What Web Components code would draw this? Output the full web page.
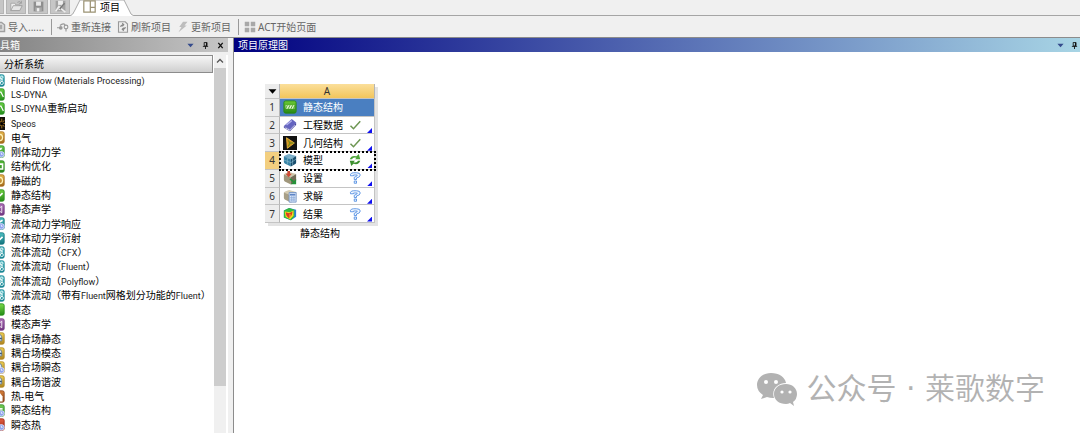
<!DOCTYPE html>
<html lang="zh-CN">
<head>
<meta charset="utf-8">
<title>项目</title>
<style>
  html, body {
    height: 100%;
  }
  body {
    margin: 0;
    overflow: hidden;
    background: #f0f0f0;
    color: #000;
    font: 10px/14px "Noto Sans", "Noto Sans CJK SC", sans-serif;
  }
</style>
</head>
<body>
<work-bench></work-bench>

<script>
const clock = '<circle cx="11.500" cy="11.500" r="3.500" fill="#8fa4ee" stroke="#dfe5ff"/><path d="M11.500 9.500v2h1.500" fill="none" stroke="#fff"/>';
const tile = (light, dark, mark) => `
  <defs><linearGradient id="g" x2="0" y2="1"><stop stop-color="${light}"/><stop offset="1" stop-color="${dark}"/></linearGradient></defs>
  <rect x="1" y="1" width="14" height="14" rx="2" fill="url(#g)" stroke="${dark}"/>${mark}`;
const cube = (top, left, right) => `
  <path d="M1 4.500Q1 3 3 2.500L7 1l8 2.500L9 7z" fill="${top}"/><path d="M1 4l8 3v8.500L2 12Q1 11 1 10z" fill="${left}"/><path d="M9 7l6-3.500V11q0 1-1 1.500L9 15.500z" fill="${right}"/>`;

const ICONS = {
  open: '<path d="M1 13V4h5l1 2h5v2" fill="#eee" stroke="#a0a0a0"/><path d="M1 13l3-6h11l-3 6z" fill="#e6e6e6" stroke="#989898"/><path d="M9 3q3-3 5 1m0-3v3h-3" fill="none" stroke="#999"/>',
  save: '<path d="M2 2h12v12H2z" fill="#8e8e8e"/><path d="M5 2h6v5H5z" fill="#e8e8e8"/><path d="M4 9h8v5H4z" fill="#aaa"/><path d="M6 10h3v4H6z" fill="#eee"/>',
  saveAs: '<path d="M2 1h12v13H2z" fill="#a2a2a2"/><path d="M5 1h6v5H5z" fill="#ededed"/><path d="M2 14l4-6 3 3 5 4M12 5l-6 7" fill="none" stroke="#eee" stroke-width="2"/><path d="M13 4l-6 7" stroke="#777" stroke-width="2"/>',
  layout: '<path d="M1 1h14v14H1zM9 1v14M9 9h6" fill="#fff" stroke="#9b9273" stroke-width="1.500"/>',
  page: '<path d="M1 2h9l4 3v9H1z" fill="#e2e2e2" stroke="#a0a0a0" stroke-width="2"/><path d="M8 5h3v6H8z" fill="#aaa"/>',
  reconnect: '<path d="M0 9h4M4 6q4-4 7-1" fill="none" stroke="#999" stroke-width="1.500"/><circle cx="5" cy="9" r="2.500" fill="#999"/><circle cx="12" cy="8" r="2.500" fill="none" stroke="#999" stroke-width="1.500"/><path d="M12 10v4" stroke="#999" stroke-width="1.500"/>',
  refresh: '<path d="M2 1h9l3 3v11H2z" fill="#eee" stroke="#999" stroke-width="1.500"/><path d="M5 8q0-3 4-3m-2-2l2 2-2 2M11 8q0 3-4 3m2-2l-2 2 2 2" fill="none" stroke="#888" stroke-width="1.500"/>',
  bolt: '<path d="M8 1h6l-4 5h3L2 15l4-7H3z" fill="#bdbdbd"/>',
  grid: '<path d="M1 1h6v6H1zM9 1h6v6H9zM1 9h6v6H1zM9 9h6v6H9z" fill="#a8a8a8"/>',
  caret: '<path d="M1 4h14l-7 8z" fill="currentColor"/>',
  pin: '<path d="M5 1h6v8H5z" fill="none" stroke="currentColor" stroke-width="2"/><path d="M9 1h3v8H9zM2 9h12v2H2zM7 11h2v5H7z" fill="currentColor"/>',
  close: '<path d="M3 2l10 12M13 2L3 14" stroke="currentColor" stroke-width="3"/>',
  up: '<path d="M2 11l6-6 6 6" fill="none" stroke="#555" stroke-width="2.500"/>',
  fluid: tile('#5cc4cc', '#168391', '<path d="M8 4l5 3M8 8l5-1M9 12l4-4" stroke="#fff"/><circle cx="12" cy="4" r="1.500" fill="none" stroke="#fff"/><circle cx="12" cy="11" r="2" fill="none" stroke="#fff"/>'),
  dyna: tile('#6bd044', '#238c1c', '<path d="M9 5h2l3 6" fill="none" stroke="#fff" stroke-width="1.500"/>'),
  speos: '<path d="M0 0h16v16H0z" fill="#14100b"/><path d="M12 2v12M8 8h8M9 4l6 8M9 12l6-8" stroke="#bd8420"/><circle cx="12" cy="8" r="2" fill="#000"/>',
  electric: tile('#e8bb50', '#a3691b', '<circle cx="9" cy="8" r="4" fill="none" stroke="#fff1b6" stroke-width="1.500"/>'),
  rigid: tile('#71cb52', '#278d23', '<path d="M7 7l5-3" stroke="#fff" stroke-width="2"/>' + clock),
  optimize: tile('#58bd38', '#27811d', '<path d="M6 5h7v6H8l-3-2" fill="none" stroke="#fff" stroke-width="2"/>'),
  structure: tile('#71cf41', '#258b19', '<path d="M6 8l2 2 5-5" fill="none" stroke="#fff" stroke-width="2"/>'),
  acoustic: tile('#af73b9', '#713681', '<path d="M12 4v8l-4-3V7z" fill="none" stroke="#fff"/>'),
  diffraction: tile('#4fc1c4', '#11737d', '<path d="M6 9l2 2 5-5" fill="none" stroke="#fff" stroke-width="2"/>'),
  response: tile('#4fc1c4', '#11737d', '<path d="M8 7l5-3" stroke="#fff" stroke-width="2"/>' + clock),
  modal: tile('#79d94a', '#238b16', ''),
  coupled: tile('#eccf54', '#ae8520', '<path d="M5 5q5-5 7 1v5H6z" fill="#dde8ee" stroke="#5c7490"/><path d="M7 8h5" stroke="#385776" stroke-width="2"/>'),
  coupledTime: tile('#eccf54', '#ae8520', '<path d="M5 5q5-5 7 1v5H6z" fill="#dde8ee" stroke="#5c7490"/>' + clock),
  thermoElectric: tile('#d9813c', '#874117', '<path d="M6 4h4l3 4v6H9z" fill="#fff"/>'),
  transient: tile('#77ce56', '#2d8a28', '<path d="M7 6h6" stroke="#fff" stroke-width="2"/>' + clock),
  transientHeat: tile('#e36145', '#9b2313', clock),
  cardStructure: tile('#6cc936', '#278814', '<path d="M3 6h10v4H3z" fill="#e4f8d0"/><path d="M3 10l2-4m1 4l2-4m1 4l2-4m1 4l1-3" stroke="#3c9a20"/>'),
  book: '<path d="M1 9l9-8 5 4-7 8z" fill="#6464c0"/><path d="M8 13l7-8v3l-7 7-7-4V9z" fill="#4343a0"/><path d="M2 11l6 3 6-6" fill="none" stroke="#dcdcf4"/><path d="M4 8l6-5" stroke="#b0b0ea" stroke-width="1.500"/>',
  geometry: '<path d="M0 0h16v16H0z" fill="#111"/><path d="M4 2l9 6-8 6z" fill="#d08f18" stroke="#e7b640"/><path d="M6 5l2 3-2 4M8 8h4" fill="none" stroke="#4d8a20"/>',
  model: cube('#75aac7', '#3783a6', '#174c6b') + '<path d="M5 2l6 4v8M1 8l8 3 6-4M5 6v7M12 3L5 6" fill="none" stroke="#8dbdd0" stroke-width=".7"/>',
  setup: cube('#cec5a8', '#a0977c', '#746d58') + '<path d="M3 3h2V0h3v3h2L6.500 7z" fill="#cf4a35"/><path d="M8 9l5 4" stroke="#259239" stroke-width="2"/><path d="M15 9v6H9z" fill="#259239"/>',
  solution: cube('#d4cbb1', '#a89f86', '#81796a') + '<path d="M7 4h8v11H7z" fill="#dce8fb" stroke="#7493c6"/><path d="M8 6.500h6" stroke="#5d84c4" stroke-width="2"/><path d="M8 10h6M8 12.500h6M10 8v6M12.500 8v6" stroke="#7fa0d2" stroke-width=".8"/>',
  results: '<path d="M1 4l6-3 8 2v8l-6 4-8-3z" fill="#2a7ed8"/><path d="M1 4l6-3 6 2v8l-4 4-8-3z" fill="#33ba3c"/><path d="M2 5l6 1 4-2v6l-4 4-5-3z" fill="#f4dc21"/><path d="M3 6l4 1 4-2-1 4-3 4-3-3z" fill="#de3a20"/><path d="M8 8v6" stroke="#f4dc21"/>',
  check: '<path d="M2 9l4 4 9-10" fill="none" stroke="#6d9652" stroke-width="2"/>',
  update: '<path d="M1 7q2-6 9-4l3-3 2 7H8l2-2Q5 4 4 7z" fill="#4fa63a"/><path d="M15 9q-2 6-9 4l-3 3-2-7h7l-2 2q5 1 6-2z" fill="#3d9030"/>',
  question: '<path d="M2 5V3q1-2 4-2h4q5 0 5 3 0 3-5 4v2H7V7q4-1 4-3H6v1z" fill="#f2f8ff" stroke="#5590e2" stroke-width="1.200"/><path d="M7 12h3v3H7z" fill="#f2f8ff" stroke="#5590e2" stroke-width="1.200"/>'
};

// <app-icon name="save">: sized by --size
class AppIcon extends HTMLElement {
  connectedCallback() {
    this.attachShadow({ mode: 'open' }).innerHTML = `
      <style>
        :host {
          display: block;
          flex: none;
          width: var(--size, 13px);
          height: var(--size, 13px);
        }
        svg {
          display: block;
          width: 100%;
          height: 100%;
        }
      </style>
      <svg viewBox="0 0 16 16" aria-hidden="true">${ICONS[this.getAttribute('name')] || ''}</svg>
    `;
  }
}

// Top strip: file buttons and the open tab
class TabStrip extends HTMLElement {
  connectedCallback() {
    this.attachShadow({ mode: 'open' }).innerHTML = `
      <style>
        :host {
          display: flex;
          height: 16px;
          box-sizing: border-box;
          border-bottom: 1px solid #a5a5a5;
        }
        .files {
          display: flex;
          gap: 2px;
          margin-left: -16px;
        }
        .files button {
          width: 20px;
          height: 14px;
          padding: 0 3px;
          border: 1px solid #b4b4b4;
          border-top: 0;
          background: #c6c6c6;
          overflow: hidden;
          --size: 13px;
        }
        .tab {
          position: relative;
          width: 64px;
          height: 16px;
          padding: 0 0 3px 13px;
          box-sizing: border-box;
          display: flex;
          align-items: center;
          gap: 4px;
          border: 0;
          background: none;
          color: #000;
          font: inherit;
        }
        .edge {
          position: absolute;
          inset: 0;
          width: 100%;
          height: 100%;
        }
        .tab app-icon, .tab span {
          position: relative;
        }
      </style>
      <div class="files">
        <button aria-label="新建"></button>
        <button aria-label="打开"><app-icon name="open"></app-icon></button>
        <button aria-label="保存"><app-icon name="save"></app-icon></button>
        <button aria-label="另存为"><app-icon name="saveAs"></app-icon></button>
      </div>
      <button class="tab" role="tab" aria-selected="true">
        <svg class="edge" viewBox="0 0 64 16" preserveAspectRatio="none"><path d="M0 16Q3 15 5 10L10 0H54L61 14L64 16" fill="#fff" stroke="#aaa"/></svg>
        <app-icon name="layout"></app-icon><span>项目</span>
      </button>
    `;
  }
}

class ToolBar extends HTMLElement {
  connectedCallback() {
    this.attachShadow({ mode: 'open' }).innerHTML = `
      <style>
        :host {
          display: flex;
          align-items: center;
          height: 21px;
          color: #666;
          --size: 12px;
        }
        button {
          display: flex;
          align-items: center;
          gap: 2px;
          padding: 0;
          margin-right: 6px;
          border: 0;
          background: none;
          color: inherit;
          font: inherit;
          white-space: nowrap;
        }
        button:first-of-type {
          margin-left: -6px;
        }
        hr {
          width: 1px;
          height: 16px;
          margin: 0 5px 0 1px;
          border: 0;
          background: #999;
        }
      </style>
      <button><app-icon name="page"></app-icon>导入......</button>
      <hr>
      <button><app-icon name="reconnect"></app-icon>重新连接</button>
      <button><app-icon name="refresh"></app-icon>刷新项目</button>
      <button><app-icon name="bolt"></app-icon>更新项目</button>
      <hr>
      <button><app-icon name="grid"></app-icon>ACT开始页面</button>
    `;
  }
}

// Titled pane; colours of the title bar come from --title-*
class DockPane extends HTMLElement {
  connectedCallback() {
    const closable = this.hasAttribute('closable');
    this.attachShadow({ mode: 'open' }).innerHTML = `
      <style>
        :host {
          display: flex;
          flex-direction: column;
          min-width: 0;
        }
        header {
          display: flex;
          align-items: center;
          flex: none;
          height: 14px;
          padding-left: var(--title-indent, 4px);
          background: var(--title-bg);
          color: #fff;
        }
        h2 {
          flex: 1;
          margin: 0;
          font: inherit;
        }
        button {
          display: flex;
          justify-content: center;
          width: 15px;
          padding: 0;
          border: 0;
          background: none;
          color: #111;
          --size: 7px;
        }
        .menu {
          color: #354b8c;
        }
        ${closable ? '' : 'button:last-of-type { width: 12px; }'}
      </style>
      <header>
        <h2>${this.getAttribute('heading')}</h2>
        <button class="menu" aria-label="菜单"><app-icon name="caret"></app-icon></button>
        <button aria-label="固定"><app-icon name="pin"></app-icon></button>
        ${closable ? '<button aria-label="关闭"><app-icon name="close"></app-icon></button>' : ''}
      </header>
      <slot></slot>
    `;
  }
}

const SYSTEMS = [
  ['fluid', 'Fluid Flow (Materials Processing)'],
  ['dyna', 'LS-DYNA'],
  ['dyna', 'LS-DYNA重新启动'],
  ['speos', 'Speos'],
  ['electric', '电气'],
  ['rigid', '刚体动力学'],
  ['optimize', '结构优化'],
  ['electric', '静磁的'],
  ['structure', '静态结构'],
  ['acoustic', '静态声学'],
  ['response', '流体动力学响应'],
  ['diffraction', '流体动力学衍射'],
  ['fluid', '流体流动（CFX）'],
  ['fluid', '流体流动（Fluent）'],
  ['fluid', '流体流动（Polyflow）'],
  ['fluid', '流体流动（带有Fluent网格划分功能的Fluent）'],
  ['modal', '模态'],
  ['acoustic', '模态声学'],
  ['coupled', '耦合场静态'],
  ['coupled', '耦合场模态'],
  ['coupledTime', '耦合场瞬态'],
  ['coupled', '耦合场谐波'],
  ['thermoElectric', '热-电气'],
  ['transient', '瞬态结构'],
  ['transientHeat', '瞬态热']
];

// Latin runs are set one size smaller than the Chinese
const markLatin = (text) => text.replace(/[A-Za-z][\w ()-]*/g, '<small>$&</small>');

class SystemList extends HTMLElement {
  connectedCallback() {
    this.attachShadow({ mode: 'open' }).innerHTML = `
      <style>
        :host {
          flex: 1;
          min-height: 0;
          display: flex;
          gap: 1px;
          padding: 3px 2px 0 0;
          background: linear-gradient(#f0f0f0 3px, #fff 3px);
        }
        .main {
          flex: 1;
          display: flex;
          flex-direction: column;
          min-width: 0;
        }
        h3 {
          flex: none;
          height: 18px;
          box-sizing: border-box;
          margin: 0;
          padding: 0 4px;
          border: 1px solid #8c8c8c;
          border-left: 0;
          background: linear-gradient(#f6f6f6, #cfcfcf);
          font: inherit;
          line-height: 16px;
        }
        ul {
          flex: 1;
          display: grid;
          grid-auto-rows: 1fr;
          min-height: 0;
          margin: 0;
          padding: 0 0 1px;
          list-style: none;
        }
        li {
          display: flex;
          align-items: center;
          gap: 6px;
          margin-left: -8px;
          min-height: 0;
          white-space: nowrap;
        }
        small {
          color: #222;
          font: 9px/14px Roboto, sans-serif;
        }
        .scroll {
          display: flex;
          flex-direction: column;
          width: 12px;
          background: #f0f0f0;
        }
        .scroll button {
          display: flex;
          justify-content: center;
          padding: 2px 0 3px;
          border: 0;
          background: none;
          --size: 8px;
        }
        .track {
          flex: 1;
        }
        .thumb {
          height: 87%;
          background: #cdcdcd;
        }
      </style>
      <div class="main">
        <h3>分析系统</h3>
        <ul>${SYSTEMS.map(([icon, name]) => `<li><app-icon name="${icon}"></app-icon><span>${markLatin(name)}</span></li>`).join('')}</ul>
      </div>
      <div class="scroll">
        <button aria-label="向上滚动"><app-icon name="up"></app-icon></button>
        <div class="track"><div class="thumb"></div></div>
      </div>
    `;
  }
}

const CELLS = [
  ['cardStructure', '静态结构', ''],
  ['book', '工程数据', 'check'],
  ['geometry', '几何结构', 'check'],
  ['model', '模型', 'update'],
  ['setup', '设置', 'question'],
  ['solution', '求解', 'question'],
  ['results', '结果', 'question']
];

class SystemCard extends HTMLElement {
  connectedCallback() {
    const rows = CELLS.map(([icon, name, state], i) => `
      <tr class="${i === 0 ? 'title' : ''} ${i === 3 ? 'current' : ''}">
        <th scope="row">${i + 1}</th>
        <td><div class="cell">
          <app-icon name="${icon}"></app-icon><span>${name}</span>
          ${state ? `<app-icon class="state" name="${state}"></app-icon><i></i>` : ''}
        </div></td>
      </tr>`).join('');
    this.attachShadow({ mode: 'open' }).innerHTML = `
      <style>
        :host {
          display: block;
          width: 110px;
        }
        table {
          width: 100%;
          height: 139px;
          table-layout: fixed;
          border-collapse: separate;
          border-spacing: 0;
          background: #fff;
          box-shadow: 3px 3px #e3e3e3;
        }
        th, td {
          padding: 0;
          border-bottom: 1px solid #c4c4c4;
          font-weight: normal;
          line-height: 14px;
        }
        th {
          border-right: 1px solid #b5b5b5;
          background: #ececec;
          color: #333;
        }
        thead th {
          height: 14px;
          background: linear-gradient(#fbdf9b, #f2c55c);
        }
        thead th:first-child {
          width: 14px;
          background: #ececec;
          color: #000;
        }
        thead app-icon {
          margin: 0 auto;
          --size: 9px;
        }
        td {
          border-right: 1px solid #c4c4c4;
        }
        .cell {
          display: flex;
          align-items: center;
          height: 16px;
          padding-left: 3px;
          --size: 14px;
        }
        .cell span {
          flex: 1;
          padding-left: 6px;
        }
        .state {
          margin-right: 6px;
          --size: 12px;
        }
        i {
          align-self: flex-end;
          width: 5px;
          height: 5px;
          margin-right: 2px;
          background: #1010f0;
          clip-path: polygon(100% 0, 100% 100%, 0 100%);
        }
        .title td {
          background: #4a7fc1;
          color: #fff;
        }
        .current th {
          background: #f3cf80;
        }
        .current td {
          outline: 2px dotted #000;
          outline-offset: -1px;
        }
        p {
          margin: 3px 0 0;
          text-align: center;
        }
      </style>
      <table>
        <thead><tr><th aria-label="菜单"><app-icon name="caret"></app-icon></th><th scope="col">A</th></tr></thead>
        <tbody>${rows}</tbody>
      </table>
      <p>静态结构</p>
    `;
  }
}

class WechatMark extends HTMLElement {
  connectedCallback() {
    this.attachShadow({ mode: 'open' }).innerHTML = `
      <style>
        :host {
          position: absolute;
          right: 35px;
          bottom: 24px;
          display: flex;
          align-items: center;
          gap: 8px;
          color: #b2b2b2;
          font: 30px/40px "DejaVu Sans", "Noto Sans CJK SC", sans-serif;
          white-space: nowrap;
        }
        svg {
          width: 41px;
          height: 33px;
        }
        .name {
          font-weight: 350;
        }
      </style>
      <svg viewBox="0 0 41 33" aria-hidden="true">
        <path d="M14 0C6 0 0 5 0 12q0 6 6 10l-2 4 6-2q3 1 6 1h1C14 16 21 10 29 10 28 4 22 0 14 0z" fill="currentColor"/>
        <path d="M29 11c-7 0-12 4-12 10s5 10 12 10q2 0 4-1l4 3-1-4q4-3 4-8c0-6-5-10-11-10z" fill="currentColor"/>
        <g fill="#fff"><circle cx="9" cy="9" r="2"/><circle cx="19" cy="9" r="2"/><circle cx="25" cy="19" r="1.600"/><circle cx="33" cy="19" r="1.600"/></g>
      </svg>
      <span>公众号 · <span class="name">莱歌数字</span></span>
    `;
  }
}

class WorkBench extends HTMLElement {
  connectedCallback() {
    this.attachShadow({ mode: 'open' }).innerHTML = `
      <style>
        :host {
          position: relative;
          display: flex;
          flex-direction: column;
          height: 100%;
        }
        main {
          flex: 1;
          display: grid;
          grid-template-columns: 228px 1fr;
          gap: 5px;
          min-height: 0;
          border-top: 1px solid #8c8c8c;
        }
        .toolbox {
          min-height: 0;
          --title-bg: linear-gradient(90deg, #848484, #c6c6c6);
          --title-indent: 0;
        }
        .schematic {
          border-left: 1px solid #8c8c8c;
          background: #fff;
          --title-bg: linear-gradient(90deg, #000080, #a8d5e5);
        }
        system-card {
          margin: 32px 31px;
        }
      </style>
      <tab-strip></tab-strip>
      <tool-bar></tool-bar>
      <main>
        <dock-pane class="toolbox" heading="具箱" closable><system-list></system-list></dock-pane>
        <dock-pane class="schematic" heading="项目原理图"><system-card></system-card></dock-pane>
      </main>
      <wechat-mark></wechat-mark>
    `;
  }
}

customElements.define('app-icon', AppIcon);
customElements.define('tab-strip', TabStrip);
customElements.define('tool-bar', ToolBar);
customElements.define('dock-pane', DockPane);
customElements.define('system-list', SystemList);
customElements.define('system-card', SystemCard);
customElements.define('wechat-mark', WechatMark);
customElements.define('work-bench', WorkBench);
</script>
</body>
</html>
